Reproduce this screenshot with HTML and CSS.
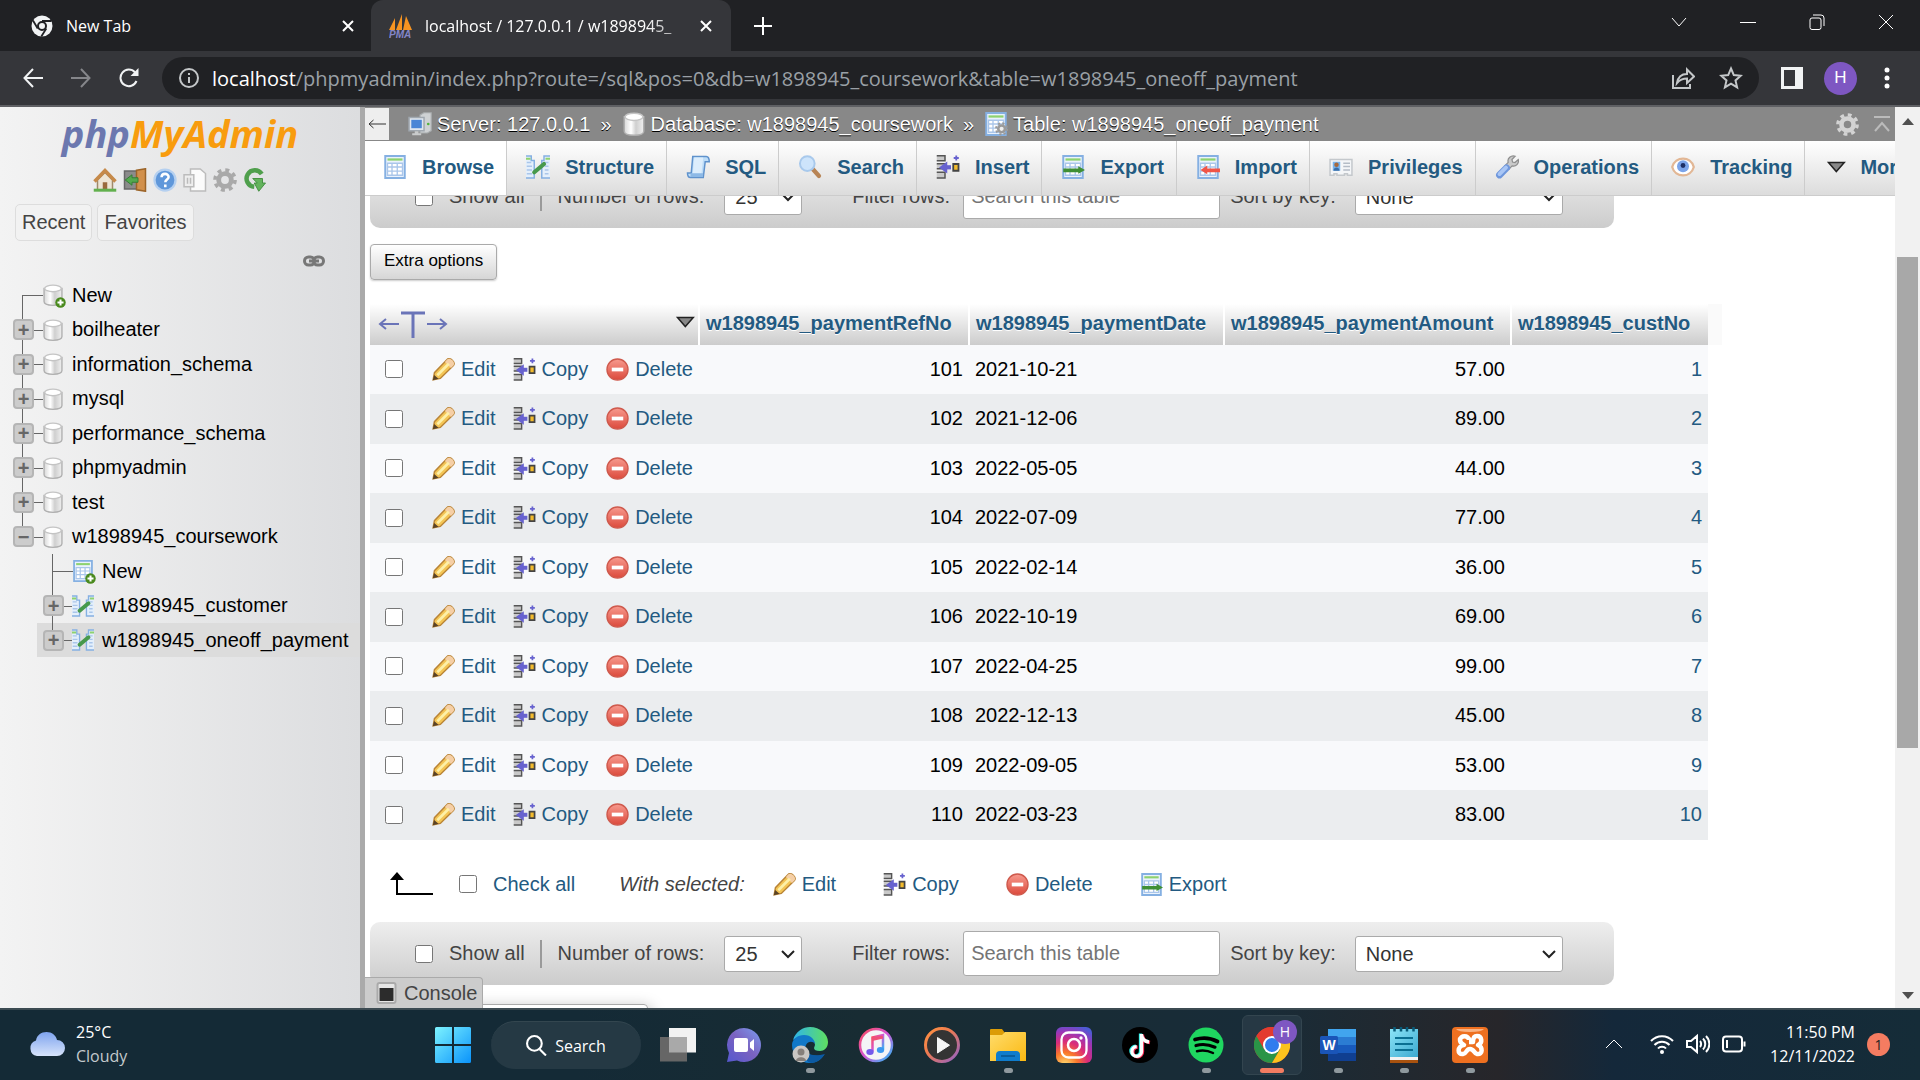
FILE: index.html
```html
<!DOCTYPE html>
<html lang="en">
<head>
<meta charset="utf-8">
<title>localhost / 127.0.0.1 / w1898945_coursework | phpMyAdmin</title>
<link rel="stylesheet" href="styles.css">
</head>
<body>
<svg class="defs" width="0" height="0" aria-hidden="true">
  <defs>
    <linearGradient id="gCyl"><stop offset="0" stop-color="#d8d8d8"/><stop offset=".35" stop-color="#fff"/><stop offset=".6" stop-color="#cfcfcf"/><stop offset="1" stop-color="#f0f0f0"/></linearGradient>
    <linearGradient id="gRed" x2="0" y2="1"><stop offset="0" stop-color="#f79a8e"/><stop offset="1" stop-color="#dc4a3c"/></linearGradient>
    <linearGradient id="gWin" x2="1" y2="1"><stop offset="0" stop-color="#7df3ff"/><stop offset="1" stop-color="#0a93fb"/></linearGradient>
    <linearGradient id="gCloud" x2="0" y2="1"><stop offset="0" stop-color="#7ea3ee"/><stop offset="1" stop-color="#d7e4fb"/></linearGradient>
    <linearGradient id="gChat" x1="1" x2="0" y2="1"><stop offset="0" stop-color="#7b9df0"/><stop offset=".5" stop-color="#7a62c0"/><stop offset="1" stop-color="#5558cf"/></linearGradient>
    <linearGradient id="gEdge"><stop offset="0" stop-color="#2fb4ea"/><stop offset="1" stop-color="#5fe060"/></linearGradient>
    <linearGradient id="gTunes" x2="1" y2="1"><stop offset="0" stop-color="#fb4a5a"/><stop offset=".5" stop-color="#d357d8"/><stop offset="1" stop-color="#25c0f8"/></linearGradient>
    <linearGradient id="gMedia" x2="1" y2="1"><stop offset="0" stop-color="#ff9340"/><stop offset=".4" stop-color="#ee7b50"/><stop offset="1" stop-color="#9161c8"/></linearGradient>
    <linearGradient id="gFolder" x2="1" y2="1"><stop offset="0" stop-color="#ffdc6b"/><stop offset="1" stop-color="#fbb912"/></linearGradient>
    <radialGradient id="gInsta" cx=".25" cy="1.05" r="1.15"><stop offset="0" stop-color="#ffdd70"/><stop offset=".3" stop-color="#f9772b"/><stop offset=".55" stop-color="#dc2c77"/><stop offset=".8" stop-color="#9a36b8"/><stop offset="1" stop-color="#4f5ad4"/></radialGradient>
    <linearGradient id="gNote" x2="1" y2="1"><stop offset="0" stop-color="#8be4f7"/><stop offset="1" stop-color="#3ca9d0"/></linearGradient>
  </defs>
  <symbol id="i-db" viewBox="0 0 16 16"><path d="M1.500 3.200v9.600C1.500 14.500 4.200 15.500 8 15.500s6.500-1 6.500-2.700V3.200z" fill="url(#gCyl)" stroke="#b0b0b0"/><ellipse cx="8" cy="3.200" rx="6" ry="2.400" fill="#fff" stroke="#c4c4c4"/></symbol>
  <symbol id="i-plus" viewBox="0 0 8 8"><circle cx="4" cy="4" r="3.800" fill="#4a8a1e"/><path d="M4 1.800v4.400M1.800 4h4.400" stroke="#fff" stroke-width="1.500"/></symbol>
  <symbol id="i-table" viewBox="0 0 16 16"><path d="M1.500.7h13v14.600h-13z" fill="#eaf2fc" stroke="#85b0e2" stroke-width="1.300"/><path d="M3 3h10" stroke="#8ed26f" stroke-width="1.500"/><path d="M3 5.500h10v8H3zM3 8h10M3 10.700h10M6 5.500v8M9.500 5.500v8" fill="#fff" stroke="#aac6ea" stroke-width=".9"/></symbol>
  <symbol id="i-tablecog" viewBox="0 0 16 16"><use href="#i-table"/><g transform="translate(7.500 7) scale(.53)" color="#9a9a9a"><circle cx="8" cy="8" r="7" fill="none" stroke="#9a9a9a" stroke-width="2.500" stroke-dasharray="2.750 2.750"/><circle cx="8" cy="8" r="4.200" fill="#eee" stroke="#9a9a9a" stroke-width="3.200"/></g></symbol>
  <symbol id="i-struct" viewBox="0 0 16 16"><path d="M0 .7h3.500v3h2v11.600H0M16 .7h-4v3h-1.500v11.600H16" fill="#e4effb" stroke="#85b0e2"/><path d="M0 2.500h3M13 2.500h3" stroke="#8ed26f" stroke-width="1.400"/><path d="M.5 5h3M.5 7.500h3.500M.5 10h3.500M.5 12.500h3.500M12.500 5H15M12.500 7.500H15M12.500 10H15M12.500 12.500H15" stroke="#aac6ea"/><path d="M5.500 11.500 12 6" stroke="#47994c" stroke-width="2.800" stroke-linecap="round"/></symbol>
  <symbol id="i-sql" viewBox="0 0 16 16"><path d="M4.500 1 3.500 12H1c0 2 .5 3 2 3h8.500l1.300-10.500h2.700c0-2-.5-3.500-2-3.500H5z" fill="#bcdcf8" stroke="#5f92cc"/><path d="M5.500 1.700h6L10.300 12.500H4.500z" fill="#dcedfc"/><path d="M3 14.600h8c.6-.8.400-2 .4-2.400H3" fill="#8db9e6"/></symbol>
  <symbol id="i-search" viewBox="0 0 16 16"><path d="m9.500 9 4.500 5" stroke="#b88455" stroke-width="2.800" stroke-linecap="round"/><circle cx="6.200" cy="5.700" r="4.900" fill="#cde4fb" stroke="#a8c9ec" stroke-width="1.300"/></symbol>
  <symbol id="i-insert" viewBox="0 0 16 16"><path d="M.5.5H6v3.300H.5M.5 5.800H6v3.300H.5M.5 11.500H6v3.800H.5" fill="#c9c9c9" stroke="#555"/><path d="M10 8.200H6.500" stroke="#6762cf" stroke-width="2.800"/><path d="M7.500 4.300v8L2 8.300z" fill="#6762cf"/><path d="M11.500 6h3.500v4.500h-3.500z" fill="#f3bb2c" stroke="#444" stroke-width="1.200"/><path d="M13.500.3v3.400M11.800 2h3.400" stroke="#6762cf" stroke-width="1.200"/></symbol>
  <symbol id="i-export" viewBox="0 0 16 16"><use href="#i-table"/><path d="M1.500 9h10V7.500L16 10l-4.500 2.500V11.500h-10z" fill="#3f8f35"/></symbol>
  <symbol id="i-import" viewBox="0 0 16 16"><use href="#i-table"/><path d="M16 9H7.500V7L3 10l4.500 2.800V11.500H16z" fill="#f05548"/></symbol>
  <symbol id="i-priv" viewBox="0 0 16 16"><path d="M.7 3h14.600v10.500h-3v-1h-2v1h-5v-1h-2v1H.7z" fill="#f4f6f8" stroke="#c4c8cc"/><path d="M2.500 4.500h5v6h-5z" fill="#79b4ec"/><circle cx="5" cy="6.500" r="1.500" fill="#a8693c"/><path d="M3 10.500c0-3 4-3 4 0z" fill="#3a6ea8"/><path d="M9.500 5.500h4.500M9.500 7.700h4.500M9.500 10h4.500" stroke="#b4bcc6"/></symbol>
  <symbol id="i-wrench" viewBox="0 0 16 16"><path d="M13.500.8 11.300 3l.4 1.700 1.600.3 2.200-2c.7 2.700-1.600 5-4.100 4.300L9.200 9.600 6.500 7.300l2.300-2.400C8 2.200 10.700-.1 13.500.8z" fill="#c9c9c9" stroke="#8d8d8d" stroke-width=".8"/><path d="M7.700 8.600 3 13.300" stroke="#6f97dc" stroke-width="4.600" stroke-linecap="round"/><path d="M7.300 8.400 3 12.700" stroke="#a9c6f5" stroke-width="2.600" stroke-linecap="round"/></symbol>
  <symbol id="i-eye" viewBox="0 0 16 16"><path d="M.8 8c2-7.500 12.500-7.500 14.400 0-2 7.500-12.500 7.500-14.400 0z" fill="#fff" stroke="#e2b795" stroke-width="1.500"/><circle cx="8" cy="7.500" r="4" fill="#7ba4ea"/><circle cx="8" cy="7" r="1.600" fill="#1d2f66"/></symbol>
  <symbol id="i-tri" viewBox="0 0 16 16"><path d="M3 5h10.500L8.200 11z" fill="#888" stroke="#222"/></symbol>
  <symbol id="i-pencil" viewBox="0 0 16 16"><path d="m.8 15.200.9-5L10.500 1C12.500-.8 16.700 3 14.900 5.200L5.800 14.200z" fill="#f3c455" stroke="#b98436"/><path d="M10.500 1C12.500-.8 16.700 3 14.900 5.200L13.200 7 9 2.700z" fill="#f5cfa6"/><path d="m3.700 12 8-8" stroke="#fdf0a8" stroke-width="1.800"/><path d="m.5 15.500 1-3.700 3 2.700z" fill="#5a4326"/></symbol>
  <symbol id="i-del" viewBox="0 0 16 16"><circle cx="8" cy="8" r="7.300" fill="url(#gRed)" stroke="#cf5a4d"/><path d="M4 6.700h8v2.600H4z" fill="#fff"/></symbol>
  <symbol id="i-gear" viewBox="0 0 16 16"><circle cx="8" cy="8" r="6.700" fill="none" stroke="currentColor" stroke-width="2.400" stroke-dasharray="2.630 2.630"/><circle cx="8" cy="8" r="4.200" fill="none" stroke="currentColor" stroke-width="3.200"/></symbol>
  <symbol id="i-server" viewBox="0 0 16 16"><path d="M8 2 10.500.5h5v12L13 14H8z" fill="#cfd2d4" stroke="#a6aaac" stroke-width=".8"/><path d="M.7 3.700h10v8.800h-10z" fill="#dfe6ee" stroke="#a0a8b0"/><path d="M2.200 5.200h7v5.600h-7z" fill="#4a86d6"/><path d="M4.500 12.800v1.400H2.800v1.300h6v-1.300H7v-1.400" fill="#c9cbcc"/><circle cx="13.500" cy="8" r=".9" fill="#53b33f"/></symbol>
  <symbol id="i-home" viewBox="0 0 16 16"><path d="M3 8v6.500h10V8L8 3z" fill="#eee5d5" stroke="#a08a6a"/><path d="M1 9 8 1.700 15 9" fill="none" stroke="#c68a4a" stroke-width="2.300"/><path d="M6.500 9.500h3v5h-3z" fill="#9a6a3c"/><path d="M.5 14.800h15" stroke="#62b04e" stroke-width="2"/></symbol>
  <symbol id="i-exit" viewBox="0 0 16 16"><path d="M1 2h9v12H1z" fill="#8c8c8c" stroke="#686868"/><path d="m9 1.500 6-1v15l-6-1z" fill="#d1904c" stroke="#9c6428"/><path d="M10 6.500H6V4.500L1.500 8 6 11.500v-2h4z" fill="#53a94e" stroke="#2f7b30" stroke-width=".6"/></symbol>
  <symbol id="i-help" viewBox="0 0 16 16"><circle cx="8" cy="8" r="7" fill="#5f97da" stroke="#b5d0f0" stroke-width="1.500"/><path d="M5.700 6.200c0-3 4.700-3 4.700-.2 0 1.700-2.200 1.700-2.200 3.500M8.200 11v1.800" fill="none" stroke="#fff" stroke-width="1.700"/></symbol>
  <symbol id="i-doc" viewBox="0 0 16 16"><path d="M5 .7h6.500l3.500 3v11.600H5z" fill="#fbfbfb" stroke="#bcbcbc"/><path d="M.7 4.500h6.500v8H.7z" fill="#eee" stroke="#bcbcbc"/><path d="M3 6.500v4M5 6.500v4" stroke="#bbb"/></symbol>
  <symbol id="i-reloadg" viewBox="0 0 16 16"><path d="M12.500 4A5.500 5.500 0 1 0 7.500 12.500" fill="none" stroke="#4f9f4c" stroke-width="3"/><path d="M6.500 7h6.500v3h2L10.500 15.500 7.500 10h2z" fill="#63b35c" stroke="#3d8a3a" stroke-width=".6"/></symbol>
  <symbol id="i-chrome" viewBox="0 0 36 36"><circle cx="18" cy="18" r="18" fill="#e33b2e"/><path d="M2.400 9A18 18 0 0 0 18 36l8-13.500z" fill="#2a9447"/><path d="M33.600 9A18 18 0 0 1 18 36l8-13.500L18 9z" fill="#fcc31e"/><path d="M2.400 9 10.200 22.500 18 9.500h15.800A18 18 0 0 0 2.400 9z" fill="#e33b2e"/><circle cx="18" cy="18" r="9" fill="#fff"/><circle cx="18" cy="18" r="7" fill="#2f7cee"/></symbol>
</svg>

<div class="window">
  <header class="tabstrip">
    <div class="tab">
      <svg class="tab-icon" viewBox="0 0 22 22"><circle cx="11" cy="11" r="10.500" fill="#f1f3f4"/><circle cx="11" cy="11" r="4" fill="#f1f3f4" stroke="#202124" stroke-width="2"/><path d="M11 6h9.500M6.700 13.500 2 5.500M15.300 13.500l-5 8" stroke="#202124" stroke-width="1.800"/></svg>
      <span class="tab-title">New Tab</span>
      <button class="tab-close" aria-label="Close New Tab"><svg viewBox="0 0 12 12"><path d="m1 1 10 10M11 1 1 11"/></svg></button>
    </div>
    <div class="tab active">
      <svg class="tab-icon" viewBox="0 0 24 24"><path d="M0 16 6 4v12zM7 16 13 0v16zM14 16 17 2l6 14z" fill="#f79421"/><text x="0" y="24" class="pma-text">PMA</text></svg>
      <span class="tab-title fade">localhost / 127.0.0.1 / w1898945_</span>
      <button class="tab-close" aria-label="Close tab"><svg viewBox="0 0 12 12"><path d="m1 1 10 10M11 1 1 11"/></svg></button>
    </div>
    <button class="new-tab" aria-label="New tab"><svg viewBox="0 0 18 18"><path d="M9 0v18M0 9h18"/></svg></button>
    <div class="window-controls">
      <button aria-label="Search tabs"><svg viewBox="0 0 16 16"><path d="m1 4 7 8 7-8"/></svg></button>
      <button aria-label="Minimize"><svg viewBox="0 0 16 16"><path d="M0 8.500h16"/></svg></button>
      <button aria-label="Restore"><svg viewBox="0 0 16 16"><rect x="1" y="4" width="11" height="11.500" rx="2"/><path d="M4 1h8a3 3 0 0 1 3 3v8"/></svg></button>
      <button aria-label="Close"><svg viewBox="0 0 16 16"><path d="m1 1 14 14M15 1 1 15"/></svg></button>
    </div>
  </header>

  <nav class="toolbar" aria-label="Browser">
    <button aria-label="Back"><svg viewBox="0 0 20 20"><path d="M20 10H2M10 1 1.500 10l8.500 9"/></svg></button>
    <button class="dim" aria-label="Forward"><svg viewBox="0 0 20 20"><path d="M0 10h18M10 1l8.500 9-8.500 9"/></svg></button>
    <button aria-label="Reload"><svg viewBox="0 0 20 20"><path d="M17.500 13A8.300 8.300 0 1 1 16 4.300"/><path d="M19.500 0v8H11.500z" class="solid"/></svg></button>
    <div class="omnibox">
      <svg class="info" viewBox="0 0 20 20"><circle cx="10" cy="10" r="9"/><path d="M10 9v6M10 5v2"/></svg>
      <span class="url"><b>localhost</b>/phpmyadmin/index.php?route=/sql&amp;pos=0&amp;db=w1898945_coursework&amp;table=w1898945_oneoff_payment</span>
      <svg class="om-icon" viewBox="0 0 24 24"><path d="M2 9v13h17v-4M6 17c1-6 5-9 10-9V3.500l7 7-7 6.500v-4.500c-4 0-7 1-10 4.500z"/></svg>
      <svg class="om-icon" viewBox="0 0 24 24"><path d="m12 2.500 2.800 6.600 7 .6-5.300 4.700 1.600 7L12 17.700l-6.100 3.700 1.600-7-5.300-4.700 7-.6z"/></svg>
    </div>
    <svg class="panel-icon" viewBox="0 0 22 22"><path d="M1.500 1.500h19v19h-19z" fill="none" stroke="#f1f3f4" stroke-width="3"/><path d="M14 1h7v20h-7z" fill="#f1f3f4"/></svg>
    <button class="avatar" aria-label="Profile">H</button>
    <button class="dots" aria-label="Menu"><svg viewBox="0 0 6 22"><circle cx="3" cy="3" r="2.500"/><circle cx="3" cy="11" r="2.500"/><circle cx="3" cy="19" r="2.500"/></svg></button>
  </nav>

  <div class="page">
    <aside class="sidebar">
      <a class="logo" href="#"><span class="php">php</span><span class="my">MyAdmin</span></a>
      <div class="quick">
        <a href="#" aria-label="Home"><svg><use href="#i-home"/></svg></a>
        <a href="#" aria-label="Log out"><svg><use href="#i-exit"/></svg></a>
        <a href="#" aria-label="Help"><svg><use href="#i-help"/></svg></a>
        <a href="#" aria-label="Documentation"><svg><use href="#i-doc"/></svg></a>
        <a href="#" aria-label="Settings" class="gear"><svg><use href="#i-gear"/></svg></a>
        <a href="#" aria-label="Reload"><svg><use href="#i-reloadg"/></svg></a>
      </div>
      <div class="recent"><button>Recent</button><button>Favorites</button></div>
      <div class="link-row"><svg viewBox="0 0 22 12"><rect x="1.500" y="2" width="10" height="8" rx="4"/><rect x="10.500" y="2" width="10" height="8" rx="4"/><path d="M6 6h10"/></svg></div>
      <ul class="tree">
        <li class="first"><span class="exp none"></span><span class="ico"><svg><use href="#i-db"/></svg><svg class="badge-plus"><use href="#i-plus"/></svg></span><a href="#">New</a></li>
        <li><button class="exp" aria-label="Expand">+</button><span class="ico"><svg><use href="#i-db"/></svg></span><a href="#">boilheater</a></li>
        <li><button class="exp" aria-label="Expand">+</button><span class="ico"><svg><use href="#i-db"/></svg></span><a href="#">information_schema</a></li>
        <li><button class="exp" aria-label="Expand">+</button><span class="ico"><svg><use href="#i-db"/></svg></span><a href="#">mysql</a></li>
        <li><button class="exp" aria-label="Expand">+</button><span class="ico"><svg><use href="#i-db"/></svg></span><a href="#">performance_schema</a></li>
        <li><button class="exp" aria-label="Expand">+</button><span class="ico"><svg><use href="#i-db"/></svg></span><a href="#">phpmyadmin</a></li>
        <li><button class="exp" aria-label="Expand">+</button><span class="ico"><svg><use href="#i-db"/></svg></span><a href="#">test</a></li>
        <li class="last"><button class="exp minus" aria-label="Collapse">−</button><span class="ico"><svg><use href="#i-db"/></svg></span><a href="#">w1898945_coursework</a></li>
        <li class="sub"><span class="exp none"></span><span class="ico"><svg><use href="#i-table"/></svg><svg class="badge-plus"><use href="#i-plus"/></svg></span><a href="#">New</a></li>
        <li class="sub"><button class="exp" aria-label="Expand">+</button><span class="ico"><svg><use href="#i-struct"/></svg></span><a href="#">w1898945_customer</a></li>
        <li class="sub last current"><button class="exp" aria-label="Expand">+</button><span class="ico"><svg><use href="#i-struct"/></svg></span><a href="#">w1898945_oneoff_payment</a></li>
      </ul>
    </aside>

    <main class="main">
      <div class="crumbs">
        <button class="collapse" aria-label="Hide panel"><svg viewBox="0 0 18 12"><path d="M18 6H1.500M5.500 2 1 6l4.500 4"/></svg></button>
        <a href="#" class="c-server"><svg><use href="#i-server"/></svg>Server: 127.0.0.1</a><span class="sep">»</span>
        <a href="#"><svg><use href="#i-db"/></svg>Database: w1898945_coursework</a><span class="sep">»</span>
        <a href="#"><svg><use href="#i-tablecog"/></svg>Table: w1898945_oneoff_payment</a>
        <span class="page-tools"><svg class="tool-gear"><use href="#i-gear"/></svg><svg viewBox="0 0 18 18" class="tool-up"><path d="M1 2h16M2 16l7-8 7 8"/></svg></span>
      </div>
      <nav class="tabs" aria-label="Table">
        <a href="#" class="on"><svg><use href="#i-table"/></svg>Browse</a>
        <a href="#"><svg><use href="#i-struct"/></svg>Structure</a>
        <a href="#"><svg><use href="#i-sql"/></svg>SQL</a>
        <a href="#"><svg><use href="#i-search"/></svg>Search</a>
        <a href="#"><svg><use href="#i-insert"/></svg>Insert</a>
        <a href="#"><svg><use href="#i-export"/></svg>Export</a>
        <a href="#"><svg><use href="#i-import"/></svg>Import</a>
        <a href="#"><svg><use href="#i-priv"/></svg>Privileges</a>
        <a href="#"><svg><use href="#i-wrench"/></svg>Operations</a>
        <a href="#"><svg><use href="#i-eye"/></svg>Tracking</a>
        <a href="#"><svg class="tri"><use href="#i-tri"/></svg>More</a>
      </nav>
      <div class="viewport">
        <div class="content">
          <form class="navbar">
            <label class="show"><input type="checkbox">Show all</label>
            <label class="rows">Number of rows: <select><option>25</option></select></label>
            <label class="filter">Filter rows: <input type="text" placeholder="Search this table"></label>
            <label class="sort">Sort by key: <select class="wide"><option>None</option></select></label>
          </form>
          <button class="extra">Extra options</button>
          <div class="table-wrap">
          <table class="results">
            <colgroup><col class="w-act"><col class="w-ref"><col class="w-date"><col class="w-amt"><col class="w-cust"></colgroup>
            <thead><tr>
              <th><div class="th-act"><svg class="tee" viewBox="0 0 70 28"><path d="M21 14H3M8 9l-6 5 6 5M49 14h18M62 9l6 5-6 5"/><path d="M23 3h24M35 3v25" class="thick"/></svg><svg class="th-tri"><use href="#i-tri"/></svg></div></th>
              <th><a href="#">w1898945_paymentRefNo</a></th><th><a href="#">w1898945_paymentDate</a></th><th><a href="#">w1898945_paymentAmount</a></th><th><a href="#">w1898945_custNo</a></th>
            </tr></thead>
            <tbody>
              <tr><td><div class="act"><input type="checkbox" aria-label="Select 101"><a href="#"><svg><use href="#i-pencil"/></svg>Edit</a><a href="#"><svg><use href="#i-insert"/></svg>Copy</a><a href="#"><svg><use href="#i-del"/></svg>Delete</a></div></td><td class="num">101</td><td>2021-10-21</td><td class="num">57.00</td><td class="num"><a href="#">1</a></td></tr>
              <tr><td><div class="act"><input type="checkbox" aria-label="Select 102"><a href="#"><svg><use href="#i-pencil"/></svg>Edit</a><a href="#"><svg><use href="#i-insert"/></svg>Copy</a><a href="#"><svg><use href="#i-del"/></svg>Delete</a></div></td><td class="num">102</td><td>2021-12-06</td><td class="num">89.00</td><td class="num"><a href="#">2</a></td></tr>
              <tr><td><div class="act"><input type="checkbox" aria-label="Select 103"><a href="#"><svg><use href="#i-pencil"/></svg>Edit</a><a href="#"><svg><use href="#i-insert"/></svg>Copy</a><a href="#"><svg><use href="#i-del"/></svg>Delete</a></div></td><td class="num">103</td><td>2022-05-05</td><td class="num">44.00</td><td class="num"><a href="#">3</a></td></tr>
              <tr><td><div class="act"><input type="checkbox" aria-label="Select 104"><a href="#"><svg><use href="#i-pencil"/></svg>Edit</a><a href="#"><svg><use href="#i-insert"/></svg>Copy</a><a href="#"><svg><use href="#i-del"/></svg>Delete</a></div></td><td class="num">104</td><td>2022-07-09</td><td class="num">77.00</td><td class="num"><a href="#">4</a></td></tr>
              <tr><td><div class="act"><input type="checkbox" aria-label="Select 105"><a href="#"><svg><use href="#i-pencil"/></svg>Edit</a><a href="#"><svg><use href="#i-insert"/></svg>Copy</a><a href="#"><svg><use href="#i-del"/></svg>Delete</a></div></td><td class="num">105</td><td>2022-02-14</td><td class="num">36.00</td><td class="num"><a href="#">5</a></td></tr>
              <tr><td><div class="act"><input type="checkbox" aria-label="Select 106"><a href="#"><svg><use href="#i-pencil"/></svg>Edit</a><a href="#"><svg><use href="#i-insert"/></svg>Copy</a><a href="#"><svg><use href="#i-del"/></svg>Delete</a></div></td><td class="num">106</td><td>2022-10-19</td><td class="num">69.00</td><td class="num"><a href="#">6</a></td></tr>
              <tr><td><div class="act"><input type="checkbox" aria-label="Select 107"><a href="#"><svg><use href="#i-pencil"/></svg>Edit</a><a href="#"><svg><use href="#i-insert"/></svg>Copy</a><a href="#"><svg><use href="#i-del"/></svg>Delete</a></div></td><td class="num">107</td><td>2022-04-25</td><td class="num">99.00</td><td class="num"><a href="#">7</a></td></tr>
              <tr><td><div class="act"><input type="checkbox" aria-label="Select 108"><a href="#"><svg><use href="#i-pencil"/></svg>Edit</a><a href="#"><svg><use href="#i-insert"/></svg>Copy</a><a href="#"><svg><use href="#i-del"/></svg>Delete</a></div></td><td class="num">108</td><td>2022-12-13</td><td class="num">45.00</td><td class="num"><a href="#">8</a></td></tr>
              <tr><td><div class="act"><input type="checkbox" aria-label="Select 109"><a href="#"><svg><use href="#i-pencil"/></svg>Edit</a><a href="#"><svg><use href="#i-insert"/></svg>Copy</a><a href="#"><svg><use href="#i-del"/></svg>Delete</a></div></td><td class="num">109</td><td>2022-09-05</td><td class="num">53.00</td><td class="num"><a href="#">9</a></td></tr>
              <tr><td><div class="act"><input type="checkbox" aria-label="Select 110"><a href="#"><svg><use href="#i-pencil"/></svg>Edit</a><a href="#"><svg><use href="#i-insert"/></svg>Copy</a><a href="#"><svg><use href="#i-del"/></svg>Delete</a></div></td><td class="num">110</td><td>2022-03-23</td><td class="num">83.00</td><td class="num"><a href="#">10</a></td></tr>
            </tbody>
          </table>
          <span class="th-end"></span>
          </div>
          <div class="bulk">
            <svg class="hook" viewBox="0 0 44 24"><path d="M8 4v18h36" fill="none" stroke="#000" stroke-width="2"/><path d="m8 0 7 8H1z"/></svg>
            <label><input type="checkbox">Check all</label>
            <em>With selected:</em>
            <a href="#"><svg><use href="#i-pencil"/></svg>Edit</a>
            <a href="#"><svg><use href="#i-insert"/></svg>Copy</a>
            <a href="#"><svg><use href="#i-del"/></svg>Delete</a>
            <a href="#"><svg><use href="#i-export"/></svg>Export</a>
          </div>
          <form class="navbar">
            <label class="show"><input type="checkbox">Show all</label>
            <label class="rows">Number of rows: <select><option>25</option></select></label>
            <label class="filter">Filter rows: <input type="text" placeholder="Search this table"></label>
            <label class="sort">Sort by key: <select class="wide"><option>None</option></select></label>
          </form>
          <div class="next-box"></div>
        </div>
        <button class="console"><svg viewBox="0 0 20 22"><rect x="1" y="1" width="18" height="20" rx="2" fill="#e6e6e6" stroke="#aaa" stroke-width="2"/><path d="M3 6h14v13H3z" fill="#2c2c2c"/></svg>Console</button>
      </div>
    </main>
    <div class="scrollbar" aria-hidden="true">
      <svg viewBox="0 0 12 8"><path d="m0 8 6-7 6 7z"/></svg>
      <div class="track"><div class="thumb"></div></div>
      <svg viewBox="0 0 12 8"><path d="m0 0 6 7 6-7z"/></svg>
    </div>
  </div>

  <footer class="taskbar">
    <div class="weather">
      <svg viewBox="0 0 36 24"><path d="M8 24a8 8 0 0 1-1-15.500C8 3 12 0 17.500 0S27 3.500 28 8a8 8 0 0 1 0 16z" fill="url(#gCloud)"/></svg>
      <div><span>25°C</span><span class="cond">Cloudy</span></div>
    </div>
    <div class="apps">
      <button class="start" aria-label="Start"><svg viewBox="0 0 36 36"><path d="M0 1.500Q0 0 1.500 0H17v17H0zM19 0h15.500Q36 0 36 1.500V17H19zM0 19h17v17H1.500Q0 36 0 34.500zM19 19h17v15.500q0 1.500-1.500 1.500H19z" fill="url(#gWin)"/></svg></button>
      <button class="task-search"><svg viewBox="0 0 20 20"><circle cx="8" cy="8" r="7"/><path d="m13 13.500 6 6"/></svg>Search</button>
      <button class="app" aria-label="Task view"><svg viewBox="0 0 36 36"><path d="M9 1h27v24.500H9z" fill="#f2f2f2"/><path d="M0 10h27v24.500H0z" fill="#666"/><path d="M9 10h18v15.500H9z" fill="#a9a9a9"/></svg></button>
      <button class="app" aria-label="Chat"><svg viewBox="0 0 36 36"><path d="M18 1a17 17 0 1 1-7 32.500L1 35l2-9A17 17 0 0 1 18 1z" fill="url(#gChat)"/><rect x="8" y="11" width="14" height="14" rx="2" fill="#fff"/><path d="M24 15.500 28 12v12l-4-3.500z" fill="#fff"/></svg></button>
      <button class="app run" aria-label="Edge"><svg viewBox="0 0 36 36"><path d="M1 13C4 4 11 0 18 0c10 0 18 7 18 15 0 6-4 9-8 9-4 0-6-1-6-3l1-3c0-4-4-8-11-8-5 0-9 1-11 3z" fill="url(#gEdge)"/><path d="M0 18C0 12 6 8 12 8c7 0 11 5 11 9-2-3-7-3-9 1-3 7 4 13 18 10-4 6-9 8-14 8C8 36 0 28 0 18z" fill="#1178c8"/><path d="M14 18c-3 7 4 13 19 9-4 6-9 9-14 9-8-2-9-13-5-18z" fill="#0c5aa2"/><circle cx="9" cy="27" r="8.500" fill="#c9c6c3"/><circle cx="9" cy="25" r="3.500" fill="#857f7b"/><path d="M4 34c0-5 10-5 10 0z" fill="#857f7b"/></svg></button>
      <button class="app" aria-label="iTunes"><svg viewBox="0 0 36 36"><circle cx="18" cy="18" r="16" fill="#f4f4f6" stroke="url(#gTunes)" stroke-width="2.500"/><path d="M14.500 24.500V10.500L25 8v14.500" fill="none" stroke="url(#gTunes)" stroke-width="2.500"/><path d="M14 12.500 25 10" stroke="#ee5078" stroke-width="3"/><ellipse cx="12" cy="25" rx="3.700" ry="3" fill="#7459ea"/><ellipse cx="22.500" cy="23" rx="3.700" ry="3" fill="#3d98ef"/></svg></button>
      <button class="app" aria-label="Media player"><svg viewBox="0 0 36 36"><circle cx="18" cy="18" r="16.500" fill="#343434" stroke="url(#gMedia)" stroke-width="3"/><path d="M13.500 10.500v15.500l12-7.800z" fill="#f5f5f5" stroke="#f5f5f5" stroke-linejoin="round"/></svg></button>
      <button class="app run" aria-label="File Explorer"><svg viewBox="0 0 36 36"><path d="M0 3q0-1 1-1h11l3 4v6H0z" fill="#dc9c07"/><path d="M0 8h12l3-3h20q1 0 1 1v28H0z" fill="url(#gFolder)"/><path d="M6 34V28q0-4 4-4h16q4 0 4 4v6z" fill="#0f7ccc"/><path d="M11 29h14" stroke="#07558f" stroke-width="1.500"/></svg></button>
      <button class="app" aria-label="Instagram"><svg viewBox="0 0 36 36"><rect width="36" height="36" rx="6" fill="url(#gInsta)"/><rect x="5.500" y="5.500" width="25" height="25" rx="7" fill="none" stroke="#fff" stroke-width="2.300"/><circle cx="18" cy="18" r="6" fill="none" stroke="#fff" stroke-width="2.500"/><circle cx="25" cy="11" r="1.700" fill="#fff"/></svg></button>
      <button class="app" aria-label="TikTok"><svg viewBox="0 0 36 36"><circle cx="18" cy="18" r="18"/><g fill="none" stroke-width="3.300"><path d="M18.500 6.500v17.500a4.800 4.800 0 1 1-4.800-4.800M18.500 8c1 4 3.500 6 7.500 6.500" stroke="#2cf0e8"/><path d="M20.500 7.500v17.500a4.800 4.800 0 1 1-4.800-4.800M20.500 9c1 4 3.500 6 7.500 6.500" stroke="#fb2c55"/><path d="M19.500 7v17.500a4.800 4.800 0 1 1-4.800-4.800M19.500 8.500c1 4 3.500 6 7.500 6.500" stroke="#fff"/></g></svg></button>
      <button class="app run" aria-label="Spotify"><svg viewBox="0 0 36 36"><circle cx="18" cy="18" r="17.500" fill="#1fd760"/><g fill="none" stroke="#000" stroke-linecap="round"><path d="M7 12.500c8-2.500 16-1.500 22.500 2" stroke-width="3.800"/><path d="M8 18.500c7-2 13-1 19 1.700" stroke-width="3.200"/><path d="M9 24.200c6-1.500 11-.7 16 1.800" stroke-width="2.500"/></g></svg></button>
      <button class="app run focus" aria-label="Chrome"><svg><use href="#i-chrome"/></svg><span class="profile">H</span></button>
      <button class="app run" aria-label="Word"><svg viewBox="0 0 36 36"><path d="M8 2h28v8H8z" fill="#41a5ee"/><path d="M8 10h28v8H8z" fill="#2b7cd3"/><path d="M8 18h28v8H8z" fill="#185abd"/><path d="M8 26h28v8H8z" fill="#103f91"/><rect y="9" width="18" height="18" rx="1.500" fill="#1a55b8"/><text x="9" y="23" text-anchor="middle" class="word-w">W</text></svg></button>
      <button class="app run" aria-label="Notepad"><svg viewBox="0 0 36 36"><path d="M4 28h28v8H4z" fill="#a8520f"/><path d="M4 25h28v8H4z" fill="#f2f2f2"/><path d="M4 2h28v28H4z" fill="url(#gNote)"/><path d="M9 11h18M9 17h18M9 23h18" stroke="#0a6f92" stroke-width="2"/><path d="M8.500 0v4.500M15 0v4.500M21 0v4.500M27.500 0v4.500" stroke="#075a78" stroke-width="2.500"/></svg></button>
      <button class="app run" aria-label="XAMPP"><svg viewBox="0 0 36 36"><rect width="36" height="36" rx="4" fill="#ee7020"/><path d="M4 2h28q-2 3-14 3T4 2z" fill="#f9b384"/><path d="M17 13c0-5-9-5-9 0 0 3 2 4 4 5-7 1-7 10-1 9 4-.5 3-5 7-5s4 4.500 7 5c6 1 6-7 1-9 5-2 4-9-1-9-4 0-4 4-4 6h-4" fill="none" stroke="#fff" stroke-width="4.500" stroke-linejoin="round"/></svg></button>
    </div>
    <div class="tray">
      <svg viewBox="0 0 24 24" class="thin"><path d="m4 16 8-8 8 8"/></svg>
      <svg viewBox="0 0 24 24" class="gap"><path d="M1 9c6-6.500 16-6.500 22 0M4.500 13c4-4.500 11-4.500 15 0M8 16.500c2-2.500 6-2.500 8 0"/><circle cx="12" cy="20" r="2" class="fill"/></svg>
      <svg viewBox="0 0 24 24"><path d="M1 9v6h4l6 5V4L5 9zM14 9c1.500 1.500 1.500 4.500 0 6M17 6.500c3 3 3 8 0 11M20 4c4.500 4.500 4.500 11.500 0 16"/></svg>
      <svg viewBox="0 0 24 24"><rect x="1" y="4.500" width="19" height="15" rx="3"/><path d="M22.500 9.500v5M5 8v8" class="bold"/></svg>
      <div class="clock"><span>11:50 PM</span><span>12/11/2022</span></div>
      <span class="notif">1</span>
    </div>
  </footer>
</div>
</body>
</html>
```
FILE: styles.css
```css
* { box-sizing: border-box; }
html, body { height: 100%; margin: 0; }
body { font-family: "Liberation Sans", Arial, sans-serif; font-size: 20px; color: #000; overflow: hidden; }
button { font: inherit; border: 0; padding: 0; background: none; color: inherit; }
a { color: #235a81; text-decoration: none; }
svg { flex: none; display: block; }
.defs { position: absolute; }

.window { display: flex; flex-direction: column; height: 100vh; }

/* browser tabs */
.tabstrip { flex: none; display: flex; align-items: center; height: 51px; background: #202124; color: #fff; font-family: "Open Sans", "Noto Sans", sans-serif; font-size: 16px; }
.tab { display: flex; align-items: center; width: 371px; height: 51px; padding: 0 14px 0 31px; }
.tab.active { width: 360px; padding: 0 16px 0 18px; background: #35363a; border-radius: 12px 12px 0 0; }
.tab-icon { width: 22px; height: 22px; margin-right: 13px; }
.active .tab-icon { width: 24px; height: 26px; margin-right: 12px; }
.pma-text { font: italic bold 10px "Liberation Sans", sans-serif; fill: #8486c9; }
.tab-title { flex: 1; white-space: nowrap; }
.fade { -webkit-mask-image: linear-gradient(90deg, #000 85%, #0006); mask-image: linear-gradient(90deg, #000 85%, #0006); }
.tab-close { width: 18px; height: 18px; margin-left: 12px; display: grid; place-items: center; }
.tab-close svg { width: 12px; height: 12px; }
.tabstrip button svg { fill: none; stroke: #fff; stroke-width: 2; }
.new-tab { margin-left: 23px; }
.new-tab svg { width: 18px; height: 18px; }
.window-controls { display: flex; margin-left: auto; height: 43px; align-self: flex-start; }
.window-controls button { width: 69px; display: grid; place-items: center; }
.window-controls svg { width: 16px; height: 16px; }
.tabstrip .window-controls svg { stroke-width: 1; }

/* browser toolbar */
.toolbar { flex: none; display: flex; align-items: center; height: 56px; padding: 0 30px 0 23px; background: #35363a; border-bottom: 2px solid #5f6064; color: #fff; }
.toolbar button { width: 20px; margin-right: 28px; }
.toolbar button svg { width: 20px; height: 20px; fill: none; stroke: #f1f3f4; stroke-width: 2; }
.toolbar .dim svg { stroke: #85868a; }
.toolbar .solid { fill: #f1f3f4; stroke: none; }
.omnibox { flex: 1; display: flex; align-items: center; height: 42px; margin-right: 22px; padding: 0 16px 0 17px; border-radius: 21px; background: #202124; }
.toolbar button:nth-child(3) { margin-right: 23px; }
.omnibox svg { fill: none; stroke: #c4c7c9; stroke-width: 2; }
.info { width: 20px; height: 20px; margin-right: 13px; }
.url { flex: 1; font-family: "Open Sans", "Noto Sans", sans-serif; font-size: 20px; color: #9aa0a6; white-space: nowrap; }
.url b { font-weight: 400; color: #fff; }
.om-icon { width: 24px; height: 24px; margin-left: 24px; }
.panel-icon { width: 22px; height: 22px; margin-right: 21px; }
.toolbar .avatar { width: 33px; height: 33px; margin-right: 27px; border-radius: 50%; background: #7e57c2; font-size: 17px; }
.toolbar .dots { width: 6px; margin: 0; }
.toolbar .dots svg { width: 6px; height: 24px; fill: #fff; stroke: none; }

.page { flex: 1; min-height: 0; display: flex; }

/* navigation panel */
.sidebar { flex: none; width: 365px; border-right: 5px solid #aaa; background: linear-gradient(90deg, #f3f3f3, #dcdddf); }
.logo { display: flex; justify-content: center; height: 52px; align-items: center; font: italic 700 38px "Open Sans", "Noto Sans", sans-serif; }
.logo .php { color: #6c78af; }
.logo .my { color: #f89c0e; }
.quick { display: flex; justify-content: center; gap: 6px; height: 45px; padding: 9px 0 0; }
.quick svg { width: 24px; height: 24px; }
.gear { color: #a9a9a9; }
.recent { display: flex; gap: 5px; padding-left: 15px; }
.recent button { height: 37px; padding: 0 6px; border: 1px solid #ddd; border-radius: 5px; background: #f2f2f2; color: #444; }
.link-row { display: flex; justify-content: flex-end; height: 37px; padding: 14px 35px 0 0; }
.link-row svg { width: 22px; height: 12px; fill: none; stroke: #777; stroke-width: 3; }
.tree { list-style: none; margin: 0; padding: 0 0 0 13px; }
.tree li { display: flex; align-items: center; height: 34px; position: relative; }
.tree li:nth-child(even) { height: 35px; }
.tree li::before { content: ""; position: absolute; left: 9px; top: 0; bottom: 0; width: 1px; background: #666; }
.tree li.first::before { top: 50%; }
.tree li.last::before { bottom: 50%; }
.tree li::after { content: ""; position: absolute; left: 9px; top: 50%; width: 21px; height: 1px; background: #666; }
.tree .sub { margin-left: 24px; padding-left: 6px; }
.tree .sub::before, .tree .sub::after { left: 15px; }
.exp { position: relative; z-index: 1; width: 21px; height: 21px; margin-right: 8px; border: 2px solid #b5b5b5; border-radius: 4px; background: #ccc; color: #666; font-weight: 700; line-height: 16px; }
.exp.none { visibility: hidden; }
.ico { position: relative; z-index: 1; width: 22px; height: 22px; margin-right: 8px; }
.ico svg { width: 22px; height: 22px; }
.tree .ico .badge-plus { position: absolute; right: -2px; bottom: -2px; width: 11px; height: 11px; }
.tree a { color: #000; }
.current { background: #dcdcdc; }

/* main area */
.main { flex: 1; min-width: 0; display: flex; flex-direction: column; background: #fff; }
.crumbs { flex: none; display: flex; align-items: center; height: 34px; padding-right: 4px; background: #888; color: #fff; text-shadow: 0 1px 0 #000; white-space: nowrap; }
.crumbs a { display: flex; align-items: center; gap: 5px; color: #fff; }
.crumbs a svg { width: 24px; height: 24px; }
.c-server { margin-left: 19px; }
.sep { margin: 0 10px; }
.collapse { width: 24px; height: 32px; background: #eee; display: grid; place-items: center; }
.collapse svg { width: 18px; height: 12px; fill: none; stroke: #333; stroke-width: 1; }
.page-tools { display: flex; gap: 14px; align-items: center; margin-left: auto; color: #d3d3d3; }
.tool-gear { width: 23px; height: 23px; }
.tool-up { width: 18px; height: 18px; fill: none; stroke: #bbb; stroke-width: 2; }
.tabs { flex: none; display: flex; height: 55px; overflow: hidden; border-bottom: 1px solid #ccc; background: #dcdcdc; }
.tabs a { flex: none; display: flex; align-items: center; gap: 15px; padding: 0 12px 2px 19px; border-left: 1px solid #ccc; background: linear-gradient(#fff, #dcdcdc); font-weight: 700; }
.tabs a.on { padding-left: 18px; border-left: 0; background: #fff; }
.tabs a:last-child { gap: 12px; }
.tabs svg { width: 24px; height: 24px; }
.viewport { position: relative; flex: 1; min-height: 0; overflow: hidden; }
.content { margin-top: -31px; padding-left: 5px; }

.navbar { display: flex; align-items: center; width: 1244px; max-width: 100%; height: 63px; padding-left: 45px; border-radius: 10px; background: linear-gradient(#eee, #ccc); color: #444; white-space: nowrap; }
.navbar label { display: flex; align-items: center; }
.show input { margin: 0 16px 0 0; }
.show { height: 28px; padding-right: 15px; border-right: 2px solid #9a9a9a; }
.rows { margin-left: 16px; gap: 20px; }
.filter { margin-left: 50px; gap: 13px; }
.sort { margin-left: 10px; gap: 19px; }
input[type="checkbox"] { width: 18px; height: 18px; flex: none; }
select { appearance: none; width: 78px; height: 36px; padding: 0 10px; border: 1px solid #aaa; border-radius: 3px; font: inherit; color: #333; background: #fff url("data:image/svg+xml,%3Csvg xmlns='http://www.w3.org/2000/svg' width='14' height='10'%3E%3Cpath d='m1 2 6 6 6-6' fill='none' stroke='%23222' stroke-width='2'/%3E%3C/svg%3E") no-repeat right 6px center; }
select.wide { width: 208px; }
.filter input { width: 257px; height: 45px; padding: 0 7px; border: 1px solid #aaa; border-radius: 3px; font: inherit; }
.extra { display: block; height: 36px; margin: 16px 0 24px; padding: 0 13px 2px; border: 1px solid #aaa; border-radius: 4px; background: linear-gradient(#fff, #d6d6d6); font-size: 17px; box-shadow: 0 1px 2px #ccc; }

.table-wrap { display: flex; }
.results { width: 1338px; table-layout: fixed; border-collapse: collapse; }
.w-act { width: 329px; } .w-ref { width: 270px; } .w-date { width: 255px; } .w-amt { width: 287px; } .w-cust { width: 197px; }
.results th { height: 41px; padding: 0 6px 2px; text-align: left; background: linear-gradient(#fff, #ccc); border-right: 2px solid #fff; text-shadow: 0 1px 0 #fff; white-space: nowrap; }
.results th:last-child { border-right: 0; }
.th-end { width: 14px; height: 41px; background: #fafafa; }
.th-act { display: flex; justify-content: space-between; padding-left: 2px; }
.tee { width: 70px; height: 28px; fill: none; stroke: #6a74b8; stroke-width: 2; }
.tee .thick { stroke-width: 3; }
.th-tri { width: 24px; height: 24px; margin-right: -5px; }
.results td { height: 49px; padding: 0 6px 1px; background: #f8f9fb; }
.results td.num { text-align: right; }
.results tr:nth-child(even) td { height: 50px; background: #ebedef; }
.act { display: flex; align-items: center; padding-left: 9px; }
.act input { margin: 0 29px 0 0; }
.act a { display: flex; align-items: center; gap: 6px; margin-right: 18px; }
.act a:nth-of-type(2) { gap: 5px; }
.act svg, .bulk a svg { width: 23px; height: 23px; }
.bulk { display: flex; align-items: center; height: 82px; padding: 6px 0 0 19px; color: #444; }
.hook { width: 44px; height: 24px; }
.bulk label { display: flex; align-items: center; gap: 16px; margin-left: 26px; color: #235a81; }
.bulk label input { margin: 0; }
.bulk em { margin: 0 28px 0 44px; }
.bulk a { display: flex; align-items: center; gap: 6px; margin-right: 47px; }
.next-box { width: 278px; height: 60px; margin-top: 19px; border: 1px solid #aaa; border-radius: 4px; box-shadow: 3px 3px 15px #bbb; }
.console { position: absolute; left: 0; bottom: 0; display: flex; align-items: center; gap: 7px; height: 31px; padding: 0 5px 0 11px; background: #ccc; border: 1px solid #aaa; border-width: 1px 1px 0 0; border-radius: 0 4px 0 0; color: #444; }
.console svg { width: 21px; height: 22px; }

.scrollbar { flex: none; width: 25px; display: flex; flex-direction: column; align-items: center; padding: 10px 0 8px; background: #f1f1f1; }
.scrollbar svg { width: 12px; height: 8px; fill: #505050; }
.track { flex: 1; width: 21px; padding-top: 132px; }
.thumb { height: 72%; max-height: 491px; background: #a8a8a8; }

/* taskbar */
.taskbar { flex: none; display: grid; grid-template-columns: 1fr auto 1fr; align-items: center; height: 72px; border-top: 2px solid #3c4b52; background: linear-gradient(90deg, #142a36 0%, #142a36 30%, #182c33 45%, #182c38 65%, #27262a 78%, #14283a 84%, #152c38 100%); color: #fff; font-family: "Open Sans", "Noto Sans", sans-serif; font-size: 16px; }
.weather { display: flex; align-items: center; gap: 11px; padding-left: 29px; }
.weather svg { width: 36px; height: 24px; }
.weather span, .clock span { display: block; line-height: 24px; }
.weather, .tray { padding-bottom: 2px; }
.cond { color: #c3c9cc; }
.apps { display: flex; align-items: center; padding-left: 6px; }
.start { width: 60px; margin-right: 8px; display: grid; place-items: center; }
.start svg, .app svg { width: 36px; height: 36px; }
.task-search { display: flex; align-items: center; justify-content: center; gap: 8px; width: 150px; height: 48px; margin-right: 4px; border-radius: 24px; background: #253944; border-top: 1px solid #33464f; }
.task-search svg { width: 21px; height: 21px; fill: none; stroke: #fff; stroke-width: 2; }
.app { position: relative; width: 60px; height: 60px; margin: 0 3px; display: grid; place-items: center; border-radius: 6px; }
.run::after { content: ""; position: absolute; bottom: 2px; width: 9px; height: 5px; border-radius: 3px; background: #8f999e; }
.focus { background: #263844; border: 1px solid #33454f; }
.focus::after { width: 24px; bottom: 1px; background: #f47c61; }
.profile { position: absolute; right: 4px; top: 4px; width: 24px; height: 24px; border-radius: 50%; background: #7e57c2; font-size: 14px; line-height: 24px; text-align: center; }
.word-w { font: bold 14px "Liberation Sans", sans-serif; fill: #fff; }
.tray { display: flex; align-items: center; justify-content: flex-end; gap: 12px; padding-right: 30px; }
.tray svg { width: 24px; height: 24px; fill: none; stroke: #fff; stroke-width: 2; }
.tray .thin { stroke-width: 1; }
.tray .gap { margin-left: 12px; }
.tray .fill { fill: #fff; stroke: none; }
.clock { text-align: right; margin-left: 12px; }
.notif { width: 23px; height: 23px; border-radius: 50%; background: #f47c61; color: #222; font-size: 14px; line-height: 23px; text-align: center; }
```
